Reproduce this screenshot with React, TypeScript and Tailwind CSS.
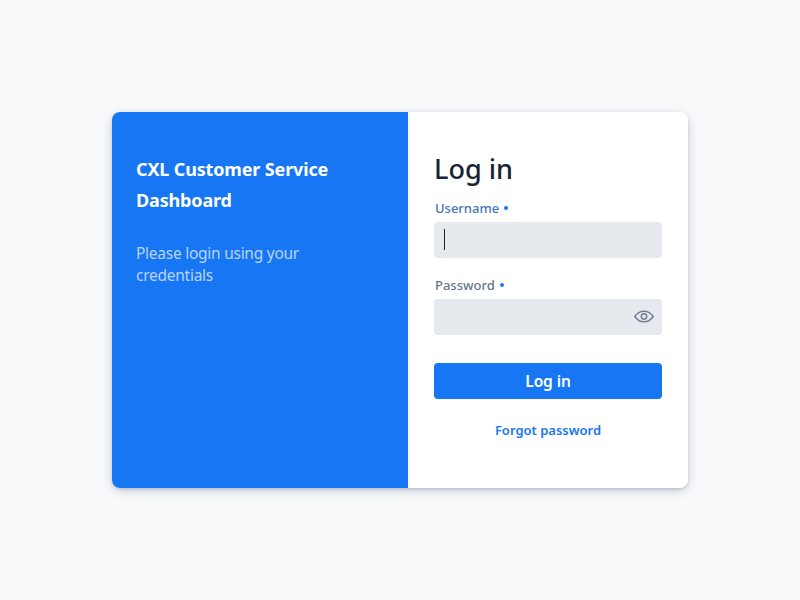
export default function App() {
  return (
    <div className="flex h-[600px] w-[800px] items-center justify-center bg-[#f8fafc] font-['Noto_Sans','Open_Sans',sans-serif]">
      <main className="flex h-[376px] w-[576px] overflow-hidden rounded-lg bg-white shadow-[0_2px_4px_-1px_rgba(24,39,75,0.2),0_3px_12px_-1px_rgba(24,39,75,0.22)]">
        <section className="w-[296px] bg-[#1676f3] px-6 pt-[42px] text-white">
          <h1 className="whitespace-nowrap text-[18px] leading-[31px] font-bold tracking-[-0.15px]">CXL Customer Service<br />Dashboard</h1>
          <p className="mt-[26px] whitespace-nowrap text-[15.5px] leading-[22px] tracking-[-0.26px] text-white/70">Please login using your<br />credentials</p>
        </section>
        <form className="flex flex-1 flex-col px-[26px] pt-[39px]" onSubmit={(e) => e.preventDefault()}>
          <h2 className="text-[27px] leading-[35px] font-medium text-[#192434]">Log in</h2>
          <label className="mt-[13px] pl-px text-[13px] leading-[18px] font-medium text-[#4574b5]">Username<span className="ml-[5px] inline-block size-1 rounded-full bg-[#1676f3] align-[3px]" /></label>
          <div className="mt-[5px] flex h-9 items-center rounded bg-[#e6eaef] pl-[10px]"><span className="mb-px h-[21px] w-px bg-[#192434]" /></div>
          <label className="mt-[18px] pl-px text-[13px] leading-[18px] font-medium text-[#687689]">Password<span className="ml-[5px] inline-block size-1 rounded-full bg-[#1676f3] align-[3px]" /></label>
          <div className="mt-[5px] flex h-9 items-center justify-end rounded bg-[#e6eaef] pr-2">
            <svg width="20" height="14" viewBox="0 0 20 14" fill="none" stroke="#728091" strokeWidth="1.5"><path d="M.8 6.5C5.5 -.6 14.5 -.6 19.2 6.5C14.5 13.6 5.5 13.6 .8 6.5Z" strokeLinejoin="round" /><circle cx="10" cy="6.5" r="2.7" /></svg>
          </div>
          <button className="mt-7 h-9 rounded bg-[#1676f3] pt-0.5 text-[15.5px] font-semibold tracking-[-0.1px] text-white">Log in</button>
          <button className="mt-[21px] self-center text-[13px] leading-5 font-semibold text-[#1676f3]">Forgot password</button>
        </form>
      </main>
    </div>
  );
}
